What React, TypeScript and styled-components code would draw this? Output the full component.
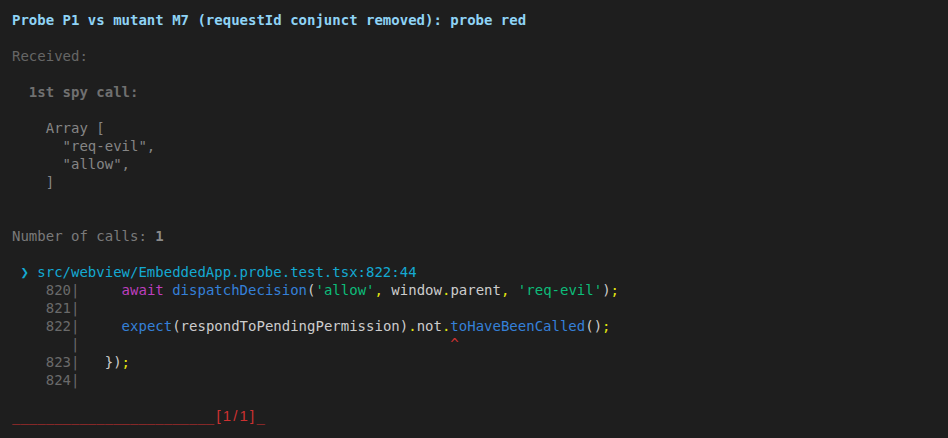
import React from "react";
import styled, { createGlobalStyle } from "styled-components";

const Global = createGlobalStyle`
  html, body { margin: 0; padding: 0; background: #1e1e1e; }
  body { width: 948px; height: 438px; overflow: hidden; }
`;

const Terminal = styled.div`
  box-sizing: border-box;
  width: 948px;
  height: 438px;
  padding: 11px 12px 0 12px;
  background: #1e1e1e;
  color: #cccccc;
  font-family: "DejaVu Sans Mono", monospace;
  font-size: 14px;
  line-height: 18px;
`;

const Line = styled.div`
  height: 18px;
  white-space: pre;
`;

const T = styled.span<{ $c?: string; $b?: boolean }>`
  color: ${(p) => p.$c ?? "inherit"};
  font-weight: ${(p) => (p.$b ? 700 : 400)};
`;

const SansCell = styled.span`
  display: inline-block;
  width: 8.43px;
  text-align: center;
  font-family: "Liberation Sans", sans-serif;
  font-size: 15px;
  color: #cd3131;
`;

const C = {
  title: "#8fd3f5",
  dim: "#666666",
  dimBold: "#707070",
  arr: "#858585",
  num: "#7a7a7a",
  cyan: "#14a9d2",
  gutter: "#6a6a6a",
  text: "#cccccc",
  kw: "#bc3fbc",
  fn: "#3580d8",
  str: "#0dbc79",
  punct: "#e5e510",
  red: "#cd3131",
};

const Gutter = ({ n }: { n?: string }) => (
  <T $c={C.gutter}>{n ? `    ${n}|` : "       |"}</T>
);

export default function App() {
  return (
    <>
      <Global />
      <Terminal>
        <Line>
          <T $c={C.title} $b>
            Probe P1 vs mutant M7 (requestId conjunct removed): probe red
          </T>
        </Line>
        <Line />
        <Line>
          <T $c={C.dim}>Received:</T>
        </Line>
        <Line />
        <Line>
          <T $c={C.dimBold} $b>
            {"  1st spy call:"}
          </T>
        </Line>
        <Line />
        <Line>
          <T $c={C.arr}>{"    Array ["}</T>
        </Line>
        <Line>
          <T $c={C.arr}>{'      "req-evil",'}</T>
        </Line>
        <Line>
          <T $c={C.arr}>{'      "allow",'}</T>
        </Line>
        <Line>
          <T $c={C.arr}>{"    ]"}</T>
        </Line>
        <Line />
        <Line />
        <Line>
          <T $c={C.num}>Number of calls: </T>
          <T $c="#8a8a8a" $b>
            1
          </T>
        </Line>
        <Line />
        <Line>
          <T $c={C.cyan}>{" ❯ src/webview/EmbeddedApp.probe.test.tsx:822:44"}</T>
        </Line>
        <Line>
          <Gutter n="820" />
          {"     "}
          <T $c={C.kw}>await</T> <T $c={C.fn}>dispatchDecision</T>
          <T $c={C.text}>(</T>
          <T $c={C.str}>'allow'</T>
          <T $c={C.punct}>,</T>
          <T $c={C.text}> window</T>
          <T $c={C.punct}>.</T>
          <T $c={C.text}>parent</T>
          <T $c={C.punct}>,</T> <T $c={C.str}>'req-evil'</T>
          <T $c={C.text}>)</T>
          <T $c={C.punct}>;</T>
        </Line>
        <Line>
          <Gutter n="821" />
        </Line>
        <Line>
          <Gutter n="822" />
          {"     "}
          <T $c={C.fn}>expect</T>
          <T $c={C.text}>(respondToPendingPermission)</T>
          <T $c={C.punct}>.</T>
          <T $c={C.text}>not</T>
          <T $c={C.punct}>.</T>
          <T $c={C.fn}>toHaveBeenCalled</T>
          <T $c={C.text}>()</T>
          <T $c={C.punct}>;</T>
        </Line>
        <Line>
          <Gutter />
          <T $c={C.red}>{" ".repeat(44) + "^"}</T>
        </Line>
        <Line>
          <Gutter n="823" />
          {"   "}
          <T $c={C.text}>{"})"}</T>
          <T $c={C.punct}>;</T>
        </Line>
        <Line>
          <Gutter n="824" />
        </Line>
        <Line />
        <Line>
          <T $c={C.red}>{"_".repeat(24)}</T>
          {"[1/1]".split("").map((ch, i) => (
            <SansCell key={i}>{ch}</SansCell>
          ))}
          <T $c={C.red}>_</T>
        </Line>
      </Terminal>
    </>
  );
}
